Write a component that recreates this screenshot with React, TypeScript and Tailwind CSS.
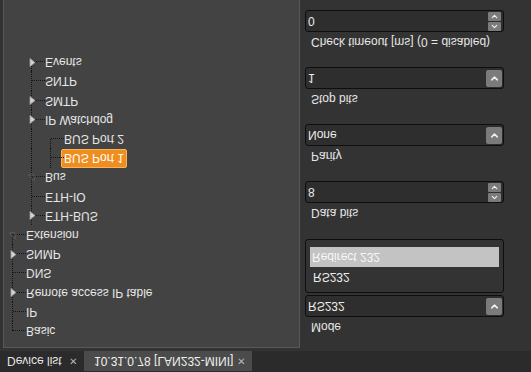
import { ChevronDown, ChevronUp } from "lucide-react";

type Row = {
  label: string;
  depth: number;
  last?: boolean;
  first?: boolean;
  state?: "collapsed" | "expanded";
  selected?: boolean;
  // which ancestor columns keep a line running through
  guides?: number[];
};

const rows: Row[] = [
  { label: "Basic", depth: 0, first: true },
  { label: "IP", depth: 0 },
  { label: "Remote access IP table", depth: 0, state: "collapsed" },
  { label: "DNS", depth: 0 },
  { label: "SNMP", depth: 0, state: "collapsed" },
  { label: "Extension", depth: 0, last: true, state: "expanded" },
  { label: "ETH-BUS", depth: 1, state: "collapsed" },
  { label: "ETH-IO", depth: 1 },
  { label: "Bus", depth: 1, state: "expanded" },
  { label: "BUS Port 1", depth: 2, selected: true, guides: [1] },
  { label: "BUS Port 2", depth: 2, last: true, guides: [1] },
  { label: "IP Watchdog", depth: 1, state: "collapsed" },
  { label: "SMTP", depth: 1, state: "collapsed" },
  { label: "SNTP", depth: 1 },
  { label: "Events", depth: 1, last: true, state: "collapsed" },
];

function Expander({ state }: { state: "collapsed" | "expanded" }) {
  if (state === "collapsed") {
    return (
      <svg width="7" height="9" viewBox="0 0 7 9" className="absolute left-[6px] top-[5px]">
        <path d="M1 0.5 L6 4.5 L1 8.5 Z" fill="#d2d2d2" stroke="#a0a0a0" strokeWidth="0.8" />
      </svg>
    );
  }
  return (
    <svg width="7" height="7" viewBox="0 0 7 7" className="absolute left-[5px] top-[6px]">
      <path d="M6 0.5 L6 6 L0.5 6 Z" fill="#262626" stroke="#707070" strokeWidth="0.8" />
    </svg>
  );
}

function TreeRow({ row }: { row: Row }) {
  const cols = Array.from({ length: row.depth + 1 }, (_, i) => i);
  return (
    <div className="flex h-[19.2px] items-center">
      {cols.map((c) => {
        const own = c === row.depth;
        const through = !own && row.guides?.includes(c);
        return (
          <div key={c} className="relative h-full w-[19px] shrink-0">
            {own && (
              <>
                <div
                  className={`absolute left-[8px] border-l border-dotted border-[#141414] ${
                    row.first ? "top-1/2 bottom-0" : row.last ? "top-0 h-1/2" : "top-0 bottom-0"
                  }`}
                />
                <div className="absolute left-[9px] right-[-3px] top-1/2 border-t border-dotted border-[#141414]" />
                {row.state && <Expander state={row.state} />}
              </>
            )}
            {through && (
              <div className="absolute left-[8px] top-0 bottom-0 border-l border-dotted border-[#141414]" />
            )}
          </div>
        );
      })}
      {row.selected ? (
        <span className="flex h-[19px] items-center rounded-[2px] border border-[#f7b45e] bg-[#ef8d1d] px-[2px] text-white">
          {row.label}
        </span>
      ) : (
        <span className="ml-[3px] whitespace-nowrap text-[#e6e6e6]">{row.label}</span>
      )}
    </div>
  );
}

function SelectBox({ value }: { value: string }) {
  return (
    <div className="flex h-[22px] w-[199px] items-center rounded-[3px] border border-[#0e0e0e] bg-[#2e2e2e] pl-[2px] pr-[1px]">
      <span className="text-[#ececec]">{value}</span>
      <div className="ml-auto flex h-[17px] w-[16px] items-center justify-center rounded-[2px] bg-[#7b7b7b]">
        <ChevronDown size={11} strokeWidth={3.2} color="#f2f2f2" />
      </div>
    </div>
  );
}

function SpinBox({ value }: { value: string }) {
  return (
    <div className="flex h-[22px] w-[199px] items-center rounded-[3px] border border-[#0e0e0e] bg-[#2e2e2e] pl-[2px] pr-[2px]">
      <span className="text-[#ececec]">{value}</span>
      <div className="ml-auto flex flex-col gap-[1px]">
        <div className="flex h-[9px] w-[13px] items-center justify-center rounded-[1px] bg-[#7b7b7b]">
          <ChevronUp size={9} strokeWidth={3} color="#f2f2f2" />
        </div>
        <div className="flex h-[9px] w-[13px] items-center justify-center rounded-[1px] bg-[#7b7b7b]">
          <ChevronDown size={9} strokeWidth={3} color="#f2f2f2" />
        </div>
      </div>
    </div>
  );
}

function Field({ label, children, overlay }: { label: string; children: React.ReactNode; overlay?: React.ReactNode }) {
  return (
    <div className="relative mb-[17px]">
      <div className="h-[16px] pl-[6px] leading-[16px] text-[#e6e6e6]">{label}</div>
      <div className="mt-[2px]">{children}</div>
      {overlay}
    </div>
  );
}

export default function App() {
  return (
    <div className="flex h-[372px] w-[531px] -scale-y-100 flex-col overflow-hidden bg-[#333333] font-['Liberation_Sans',Arial,sans-serif] text-[12px]">
      {/* tab strip */}
      <div className="h-[1px] bg-[#1e1e1e]" />
      <div className="h-[1px] bg-[#4e4e4e]" />
      <div className="flex h-[23px] items-stretch bg-[#2b2b2b] pt-[1px]">
        <div className="flex w-[81px] items-center pl-[7px] text-[#e6e6e6]">
          Device list
          <span className="ml-auto mr-[4px] text-[13px] text-[#bdbdbd]">×</span>
        </div>
        <div className="ml-[3px] flex w-[168px] items-center bg-[#4b4b4b] pl-[10px] text-[#f0f0f0]">
          10.31.0.78 [LAN232-MINI]
          <span className="ml-auto mr-[7px] text-[13px] text-[#bdbdbd]">×</span>
        </div>
      </div>
      <div className="h-[1px] bg-[#4a4a4a]" />

      <div className="flex flex-1">
        {/* tree */}
        <div className="ml-[3px] mt-[3px] w-[297px] border border-b-0 border-[#585858] bg-[#434343] pt-[7px]">
          {rows.map((r) => (
            <TreeRow key={r.label} row={r} />
          ))}
        </div>

        {/* settings */}
        <div className="flex-1 pl-[5px] pt-[16px]">
          <Field
            label="Mode"
            overlay={
              <div className="absolute left-0 top-[42px] z-10 w-[199px] rounded-[3px] border border-[#0e0e0e] bg-[#333333] px-[4px] pb-[7px] pt-[5px]">
                <div className="flex h-[20px] items-center pl-[3px] text-[#ececec]">RS232</div>
                <div className="flex h-[20px] items-center bg-[#c3c3c3] pl-[2px] text-[#f7f7f7]">Redirect 232</div>
              </div>
            }
          >
            <SelectBox value="RS232" />
          </Field>
          {/* space held by the field the open list covers */}
          <div className="h-[57px]" />
          <Field label="Data bits">
            <SpinBox value="8" />
          </Field>
          <Field label="Parity">
            <SelectBox value="None" />
          </Field>
          <Field label="Stop bits">
            <SelectBox value="1" />
          </Field>
          <Field label="Check timeout [ms] (0 = disabled)">
            <SpinBox value="0" />
          </Field>
        </div>
      </div>
    </div>
  );
}
